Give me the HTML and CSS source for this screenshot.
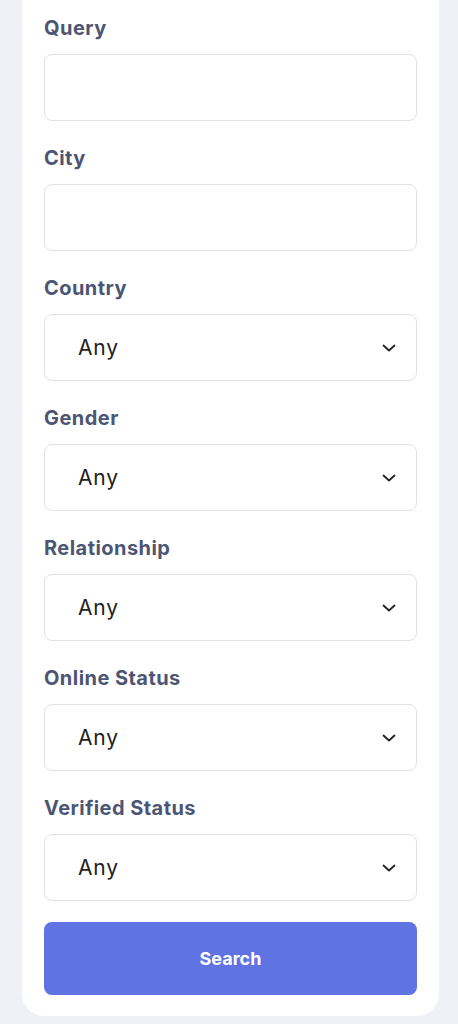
FILE: index.html
```html
<!DOCTYPE html>
<html lang="en">
<head>
    <meta charset="UTF-8">
    <meta name="viewport" content="width=device-width, initial-scale=1.0">
    <title>Search</title>
    <link rel="stylesheet" href="styles.css">
</head>
<body>
    <div class="pagina">
        <form class="cartao">
            <div class="campo">
                <label for="query">Query</label>
                <input type="text" id="query" class="caixa">
            </div>
            <div class="campo">
                <label for="city">City</label>
                <input type="text" id="city" class="caixa">
            </div>
            <div class="campo">
                <label for="country">Country</label>
                <div class="seletor">
                    <select id="country" class="caixa"><option>Any</option></select>
                    <svg class="seta" width="14" height="8" viewBox="0 0 14 8"><path d="M1.5 1.5 7 6.5 12.5 1.5" fill="none" stroke="#222" stroke-width="1.8" stroke-linecap="round" stroke-linejoin="round"/></svg>
                </div>
            </div>
            <div class="campo">
                <label for="gender">Gender</label>
                <div class="seletor">
                    <select id="gender" class="caixa"><option>Any</option></select>
                    <svg class="seta" width="14" height="8" viewBox="0 0 14 8"><path d="M1.5 1.5 7 6.5 12.5 1.5" fill="none" stroke="#222" stroke-width="1.8" stroke-linecap="round" stroke-linejoin="round"/></svg>
                </div>
            </div>
            <div class="campo">
                <label for="relationship">Relationship</label>
                <div class="seletor">
                    <select id="relationship" class="caixa"><option>Any</option></select>
                    <svg class="seta" width="14" height="8" viewBox="0 0 14 8"><path d="M1.5 1.5 7 6.5 12.5 1.5" fill="none" stroke="#222" stroke-width="1.8" stroke-linecap="round" stroke-linejoin="round"/></svg>
                </div>
            </div>
            <div class="campo">
                <label for="online">Online Status</label>
                <div class="seletor">
                    <select id="online" class="caixa"><option>Any</option></select>
                    <svg class="seta" width="14" height="8" viewBox="0 0 14 8"><path d="M1.5 1.5 7 6.5 12.5 1.5" fill="none" stroke="#222" stroke-width="1.8" stroke-linecap="round" stroke-linejoin="round"/></svg>
                </div>
            </div>
            <div class="campo">
                <label for="verified">Verified Status</label>
                <div class="seletor">
                    <select id="verified" class="caixa"><option>Any</option></select>
                    <svg class="seta" width="14" height="8" viewBox="0 0 14 8"><path d="M1.5 1.5 7 6.5 12.5 1.5" fill="none" stroke="#222" stroke-width="1.8" stroke-linecap="round" stroke-linejoin="round"/></svg>
                </div>
            </div>
            <button type="button" class="buscar">Search</button>
        </form>
    </div>
</body>
</html>
```

FILE: styles.css
```css
* {
    margin: 0;
    padding: 0;
    box-sizing: border-box;
}

body {
    background-color: #eff1f6;
    font-family: Inter, "Noto Sans", sans-serif;
}

.pagina {
    padding: 0 19px 8px 22px;
}

.cartao {
    background-color: #ffffff;
    border-radius: 0 0 22px 22px;
    padding: 13px 22px 21px 22px;
    display: flex;
    flex-direction: column;
    gap: 22px;
}

.campo {
    display: flex;
    flex-direction: column;
    gap: 11px;
}

.campo label {
    font-size: 20px;
    line-height: 30px;
    font-weight: 700;
    letter-spacing: 0.45px;
    color: #4c5674;
}

.caixa {
    width: 100%;
    height: 67px;
    border: 1px solid #e1e2e6;
    border-radius: 8px;
    background-color: #ffffff;
    font-family: inherit;
    font-size: 21px;
    letter-spacing: 0.8px;
    color: #222222;
    outline: none;
}

.seletor {
    position: relative;
}

.seletor select {
    appearance: none;
    -webkit-appearance: none;
    padding-left: 33px;
}

.seta {
    position: absolute;
    right: 21px;
    top: 30px;
    pointer-events: none;
}

.buscar {
    height: 73px;
    border: none;
    border-radius: 8px;
    background-color: #5f73e3;
    color: #ffffff;
    font-family: inherit;
    font-size: 18px;
    font-weight: 700;
    margin-top: -1px;
}
```
